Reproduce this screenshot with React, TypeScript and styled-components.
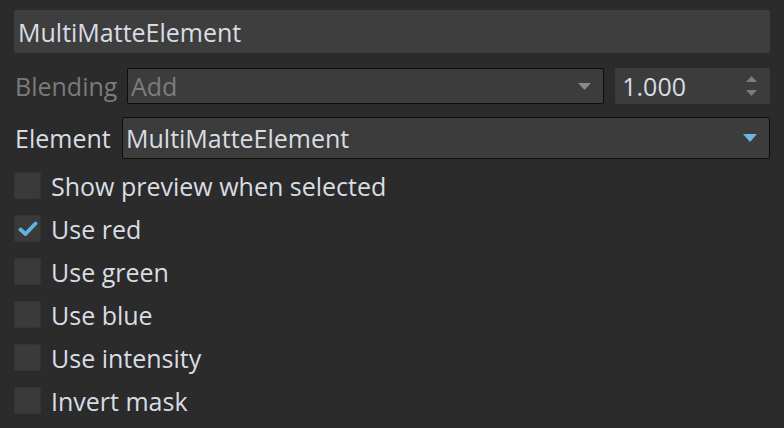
import styled, { createGlobalStyle } from 'styled-components';

const GlobalStyle = createGlobalStyle`
  html, body {
    margin: 0;
    padding: 0;
    background: #2b2b2b;
  }
  body {
    font-family: 'Open Sans', 'Noto Sans', sans-serif;
  }
`;

const Panel = styled.div`
  width: 784px;
  height: 428px;
  box-sizing: border-box;
  padding: 10px 14px 0 14px;
  display: flex;
  flex-direction: column;
  background: #2b2b2b;
  color: #d8dde3;
  font-size: 25px;
  overflow: hidden;
`;

const NameField = styled.div`
  height: 43px;
  width: 756px;
  box-sizing: border-box;
  background: #3e3e3e;
  border-radius: 2px;
  display: flex;
  align-items: center;
  padding-left: 4px;
`;

const Row = styled.div<{ $top: number; $height: number }>`
  display: flex;
  align-items: center;
  height: ${({ $height }) => $height}px;
  margin-top: ${({ $top }) => $top}px;
`;

const Label = styled.span<{ $disabled?: boolean; $width: number }>`
  width: ${({ $width }) => $width}px;
  padding-left: 1px;
  flex: none;
  color: ${({ $disabled }) => ($disabled ? '#7b7b7b' : '#d8dde3')};
`;

const Dropdown = styled.div<{ $width: number; $disabled?: boolean }>`
  width: ${({ $width }) => $width}px;
  height: 100%;
  box-sizing: border-box;
  background: #3c3c3c;
  border: 1px solid #0d0d0d;
  border-radius: 2px;
  display: flex;
  align-items: center;
  justify-content: space-between;
  padding: 0 12px 0 3px;
  color: ${({ $disabled }) => ($disabled ? '#7d7d7d' : '#d8dde3')};
`;

const SpinBox = styled.div`
  margin-left: 11px;
  width: 155px;
  height: 100%;
  box-sizing: border-box;
  background: #3c3c3c;
  border-radius: 2px;
  display: flex;
  align-items: center;
  justify-content: space-between;
  padding: 0 13px 0 7px;
`;

const SpinArrows = styled.div`
  display: flex;
  flex-direction: column;
  gap: 8px;
`;

const CheckRow = styled.div<{ $first?: boolean }>`
  display: flex;
  align-items: center;
  height: 27px;
  margin-top: ${({ $first }) => ($first ? 13 : 16)}px;
  gap: 10px;
`;

const Box = styled.div`
  width: 27px;
  height: 27px;
  box-sizing: border-box;
  background: #3a3a3a;
  border: 1px solid #353535;
  border-radius: 2px;
  display: flex;
  align-items: center;
  justify-content: center;
  flex: none;
`;

const Arrow = ({ color, w, h, up }: { color: string; w: number; h: number; up?: boolean }) => (
  <svg width={w} height={h} viewBox={`0 0 ${w} ${h}`}>
    <polygon points={up ? `0,${h} ${w},${h} ${w / 2},0` : `0,0 ${w},0 ${w / 2},${h}`} fill={color} />
  </svg>
);

const Check = () => (
  <svg width="20" height="16" viewBox="0 0 20 16">
    <path d="M2.5 8.5 L7.5 13 L17.5 2.5" fill="none" stroke="#5fb3dc" strokeWidth="3.8" strokeLinecap="round" strokeLinejoin="round" />
  </svg>
);

const options = [
  { label: 'Show preview when selected', checked: false },
  { label: 'Use red', checked: true },
  { label: 'Use green', checked: false },
  { label: 'Use blue', checked: false },
  { label: 'Use intensity', checked: false },
  { label: 'Invert mask', checked: false },
];

export default function App() {
  return (
    <>
      <GlobalStyle />
      <Panel>
        <NameField>MultiMatteElement</NameField>
        <Row $top={15} $height={36}>
          <Label $disabled $width={112}>Blending</Label>
          <Dropdown $width={478} $disabled>
            <span>Add</span>
            <Arrow color="#8a8a8a" w={13} h={7} />
          </Dropdown>
          <SpinBox>
            <span>1.000</span>
            <SpinArrows>
              <Arrow color="#7c7c7c" w={11} h={6} up />
              <Arrow color="#7c7c7c" w={11} h={6} />
            </SpinArrows>
          </SpinBox>
        </Row>
        <Row $top={13} $height={42}>
          <Label $width={107}>Element</Label>
          <Dropdown $width={649}>
            <span>MultiMatteElement</span>
            <Arrow color="#6ab6dc" w={14} h={8} />
          </Dropdown>
        </Row>
        {options.map((o, i) => (
          <CheckRow key={o.label} $first={i === 0}>
            <Box>{o.checked && <Check />}</Box>
            <span>{o.label}</span>
          </CheckRow>
        ))}
      </Panel>
    </>
  );
}
